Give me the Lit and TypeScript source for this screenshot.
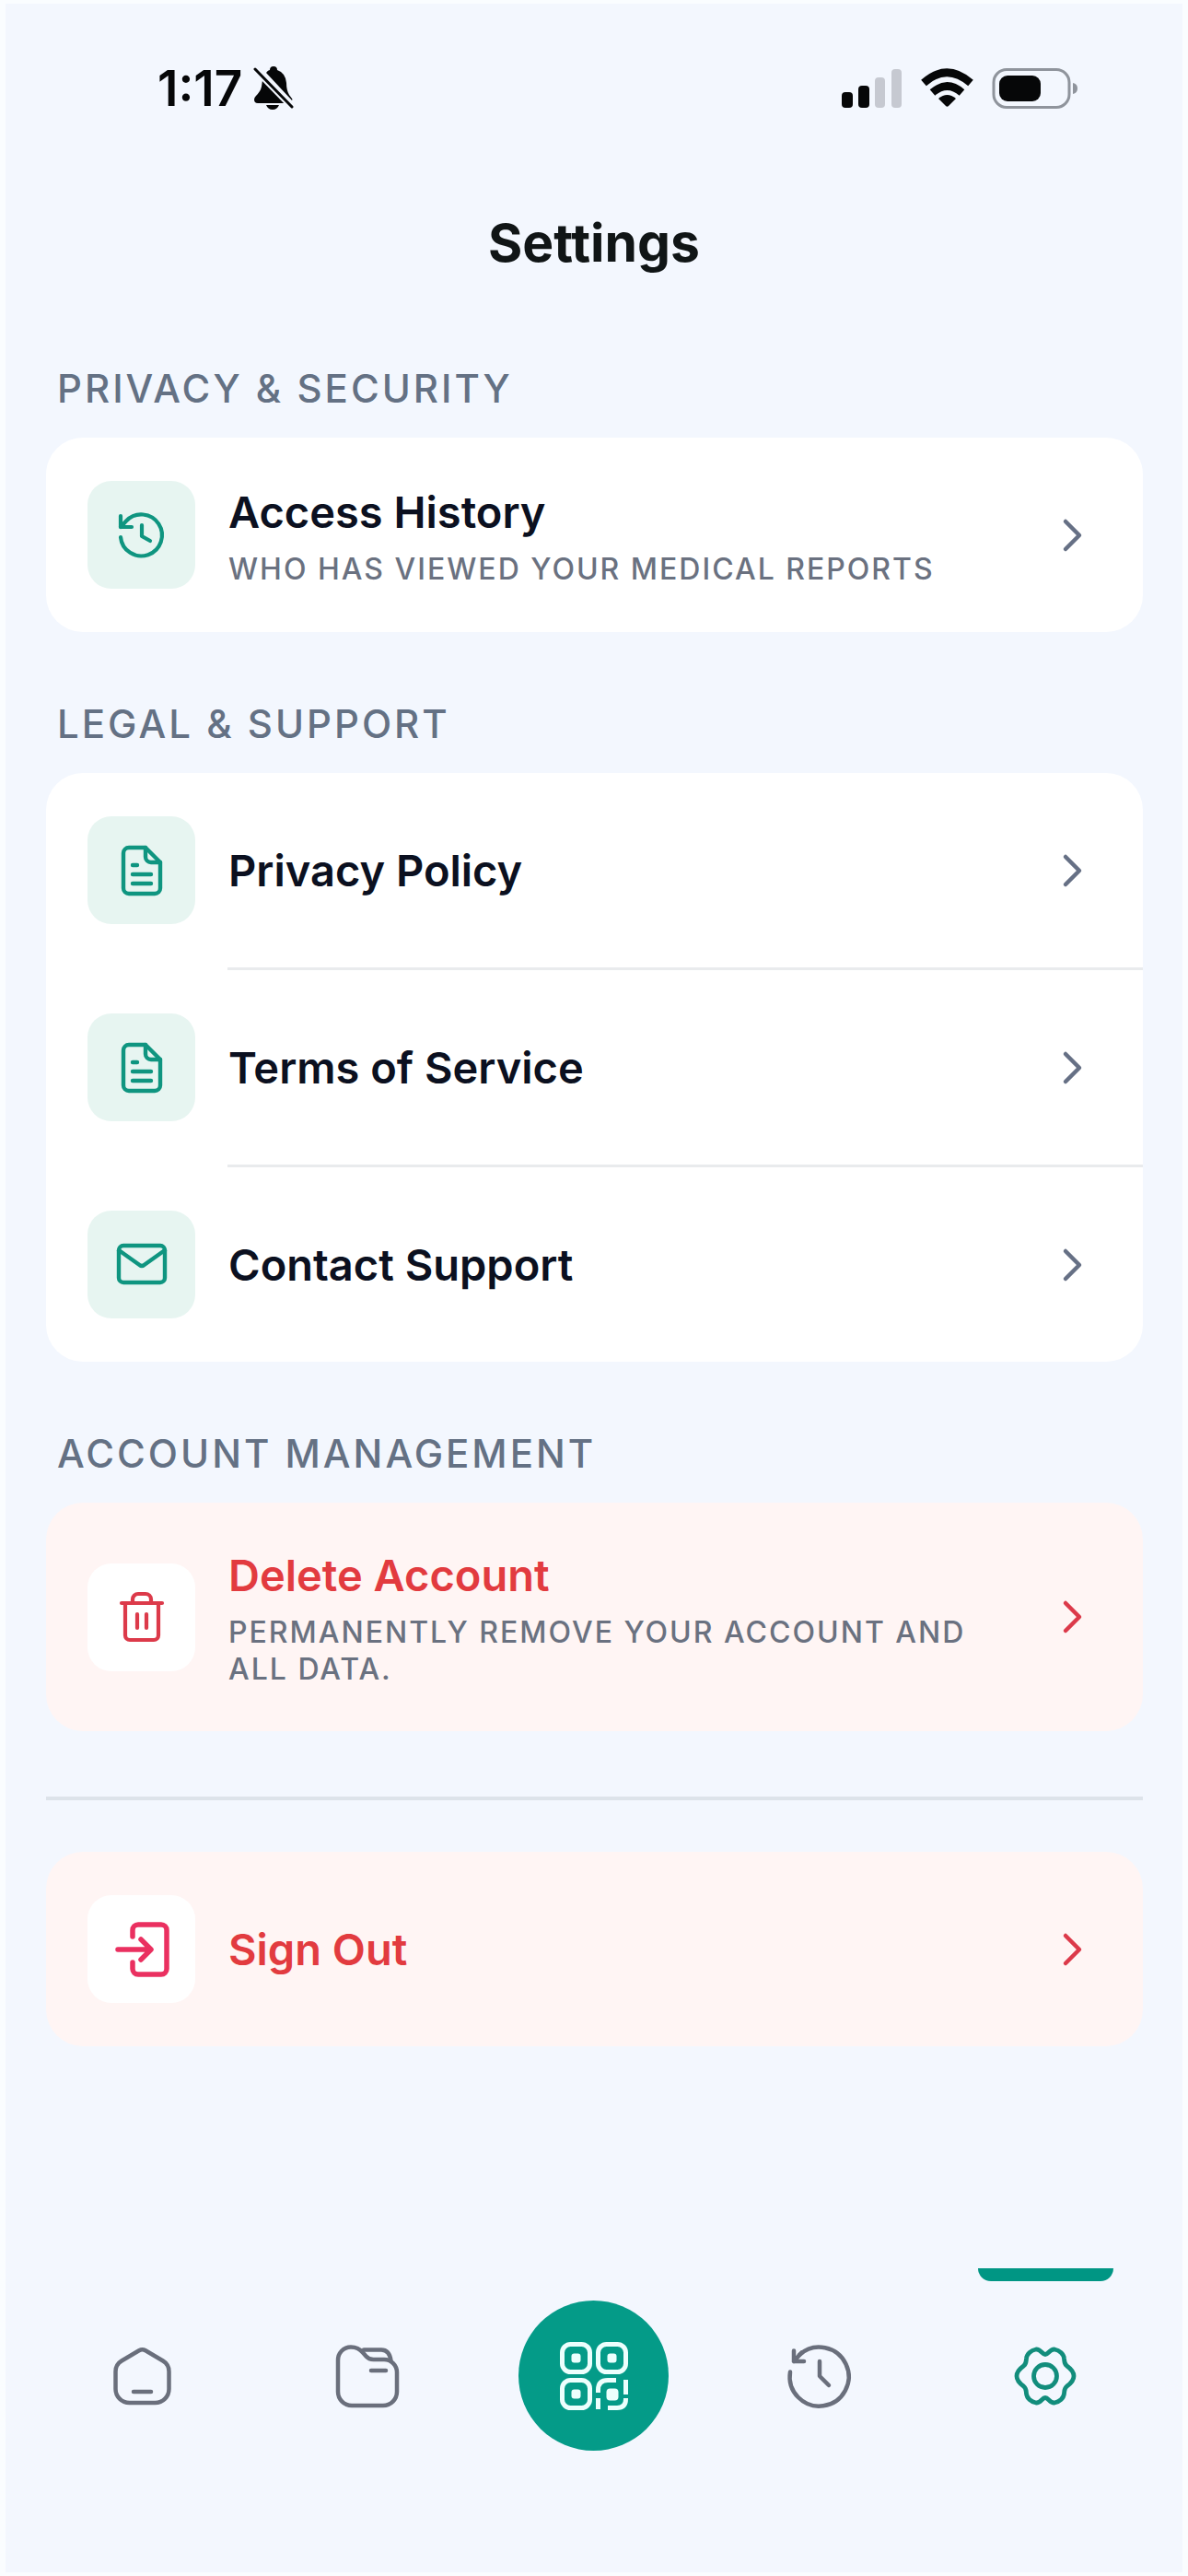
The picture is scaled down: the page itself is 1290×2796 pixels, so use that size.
import { LitElement, html, svg, css, nothing, type TemplateResult } from "lit";
import { customElement, property } from "lit/decorators.js";
import { classMap } from "lit/directives/class-map.js";

type IconName = "history" | "document" | "mail" | "trash" | "signOut" | "home" | "folder" | "qr" | "recent" | "gear";

const icons: Record<IconName, TemplateResult> = {
  history: svg`
    <g fill="none" stroke="currentColor" stroke-width="4.200" stroke-linecap="round" stroke-linejoin="round">
      <path d="M7 32a22.500 22.500 0 1 0 6-17.500L7 21"/>
      <path d="M7 9v12h12"/>
      <path d="M30 19v12l9 5"/>
    </g>`,
  document: svg`
    <g fill="none" stroke="currentColor" stroke-width="4.400" stroke-linecap="round" stroke-linejoin="round">
      <path d="M34 5H16a6 6 0 0 0-6 6v38a6 6 0 0 0 6 6h28a6 6 0 0 0 6-6V21Z"/>
      <path d="M34 5v10a6 6 0 0 0 6 6h10"/>
      <path d="M20 24h5M20 34h20M20 44h20"/>
    </g>`,
  mail: svg`
    <g fill="none" stroke="currentColor" stroke-width="4.400" stroke-linecap="round" stroke-linejoin="round">
      <rect x="5" y="9" width="50" height="40" rx="5"/>
      <path d="m5 14 22.500 16a4 4 0 0 0 5 0L55 14"/>
    </g>`,
  trash: svg`
    <g fill="none" stroke="currentColor" stroke-width="4.200" stroke-linecap="round" stroke-linejoin="round">
      <path d="M8 15h44"/>
      <path d="M12 15v35a5 5 0 0 0 5 5h26a5 5 0 0 0 5-5V15"/>
      <path d="M20 15v-4a6 6 0 0 1 6-6h8a6 6 0 0 1 6 6v4"/>
      <path d="M25 27v15M35 27v15"/>
    </g>`,
  signOut: svg`
    <g fill="none" stroke="currentColor" stroke-width="5.500" stroke-linecap="round" stroke-linejoin="round">
      <path d="M20 16V9a6 6 0 0 1 6-6h25a6 6 0 0 1 6 6v42a6 6 0 0 1-6 6H26a6 6 0 0 1-6-6v-7"/>
      <path d="M4 30h35M29 19l11 11-11 11"/>
    </g>`,
  home: svg`
    <g fill="none" stroke="currentColor" stroke-width="4.500" stroke-linecap="round" stroke-linejoin="round">
      <path d="M32 8.200 13 19.500Q6.500 23.500 6.500 31v19a15 15 0 0 0 15 15h28a15 15 0 0 0 15-15V31q0-7.500-6.500-11.500L39 8.200a7 7 0 0 0-7 0Z"/>
      <path d="M26 53h19"/>
    </g>`,
  folder: svg`
    <g fill="none" stroke="currentColor" stroke-width="4.500" stroke-linecap="round" stroke-linejoin="round">
      <path d="M3 19A14 14 0 0 1 17 4.500q8 0 13 6l3.500 4q3 3.500 8 3.500H53a14 14 0 0 1 14 14v21a15 15 0 0 1-15 15H18A15 15 0 0 1 3 53Z"/>
      <path d="M31 7.500h19q9 0 10.500 12"/>
      <path d="M39 30h16"/>
    </g>`,
  qr: svg`
    <g fill="none" stroke="currentColor" stroke-width="5" stroke-linecap="butt">
      <rect x="2.500" y="2.500" width="30" height="30" rx="9"/>
      <rect x="41.500" y="2.500" width="30" height="30" rx="9"/>
      <rect x="2.500" y="41.500" width="30" height="30" rx="9"/>
      <path d="M41.500 55v-3q0-10.500 10.500-10.500h9M71.500 41v16M41.500 61v12M71.500 61v1q0 9.500-9.500 9.500h-10"/>
    </g>
    <g fill="currentColor">
      <rect x="12.500" y="12.500" width="10" height="10" rx="3"/>
      <rect x="51.500" y="12.500" width="10" height="10" rx="3"/>
      <rect x="12.500" y="51.500" width="10" height="10" rx="3"/>
      <rect x="50.500" y="50.500" width="13" height="13" rx="4"/>
    </g>`,
  recent: svg`
    <g fill="none" stroke="currentColor" stroke-width="4.500" stroke-linecap="round" stroke-linejoin="round">
      <path d="M4 31.500A32 32 0 1 0 14 13"/>
      <path d="M8 8.500v11.500h11M8 20 16.500 10.500"/>
      <path d="M36 20v16l10 10"/>
    </g>`,
  gear: svg`
    <g fill="none" stroke="currentColor" stroke-width="4.800" stroke-linecap="round" stroke-linejoin="round">
      <path d="M36 12.500C32.500 12.500 31 6.500 26 7 20.500 8 16 12 15.500 17 15 21 15.500 22.500 12.500 25 9 27.500 5 30.500 5 36 5 41.500 9 44.500 12.500 47 15.500 49.500 15 51 15.500 55 16 60 20.500 64 26 65 31 65.500 32.500 59.500 36 59.500 39.500 59.500 41 65.500 46 65 51.500 64 56 60 56.500 55 57 51 56.500 49.500 59.500 47 63 44.500 67 41.500 67 36 67 30.500 63 27.500 59.500 25 56.500 22.500 57 21 56.500 17 56 12 51.500 8 46 7 41 6.500 39.500 12.500 36 12.500Z"/>
      <circle cx="36" cy="36" r="12.500"/>
    </g>`,
};

const viewBoxes: Record<IconName, string> = {
  history: "0 0 60 60",
  document: "0 0 60 60",
  mail: "0 0 60 60",
  trash: "0 0 60 60",
  signOut: "0 0 60 60",
  home: "0 0 72 72",
  folder: "0 0 72 72",
  qr: "0 0 74 74",
  recent: "0 0 72 72",
  gear: "0 0 72 72",
};

@customElement("ui-icon")
class UiIcon extends LitElement {
  static styles = css`
    :host {
      display: inline-flex;
      width: 60px;
      height: 60px;
    }
    svg {
      width: 100%;
      height: 100%;
      overflow: visible;
    }
  `;
  @property() name: IconName = "history";

  render() {
    return html`<svg viewBox=${viewBoxes[this.name]} aria-hidden="true">${icons[this.name]}</svg>`;
  }
}

@customElement("settings-row")
class SettingsRow extends LitElement {
  static styles = css`
    :host {
      display: block;
    }
    .row {
      display: flex;
      align-items: center;
      gap: 36px;
      width: 100%;
      padding: 47px 49px 47px 45px;
      border: 0;
      background: none;
      color: #0b1020;
      font: inherit;
      text-align: left;
      cursor: pointer;
    }
    .tile {
      display: flex;
      flex: none;
      align-items: center;
      justify-content: center;
      width: 117px;
      height: 117px;
      border-radius: 26px;
      background: #e7f5f1;
      color: #0f9580;
    }
    .text {
      display: flex;
      flex: 1;
      flex-direction: column;
      gap: 10px;
      min-width: 0;
    }
    .title {
      font-size: 47px;
      font-weight: 600;
      line-height: 64px;
    }
    .note {
      color: #6a7180;
      font-size: 32px;
      font-weight: 500;
      line-height: 40px;
      letter-spacing: 2px;
      text-transform: uppercase;
    }
    .chevron {
      flex: none;
      width: 54px;
      height: 54px;
      color: #667085;
    }
    .danger {
      color: #e23b3f;
    }
    .danger .tile {
      background: #ffffff;
      color: #dc3a4a;
    }
    .danger .chevron {
      color: #dc3a4a;
    }
    .exit .tile {
      color: #ea3060;
    }
  `;
  @property() icon: IconName = "history";
  @property() label = "";
  @property() note = "";
  @property({ type: Boolean }) danger = false;

  render() {
    const classes = { row: true, danger: this.danger, exit: this.icon === "signOut" };
    return html`
      <button type="button" class=${classMap(classes)}>
        <span class="tile"><ui-icon name=${this.icon}></ui-icon></span>
        <span class="text">
          <span class="title">${this.label}</span>
          ${this.note ? html`<span class="note">${this.note}</span>` : nothing}
        </span>
        <svg class="chevron" viewBox="0 0 54 54" aria-hidden="true">
          <path d="m19 12 15 15-15 15" fill="none" stroke="currentColor" stroke-width="4.500" stroke-linecap="round" stroke-linejoin="round" />
        </svg>
      </button>
    `;
  }
}

interface Row {
  icon: IconName;
  label: string;
  note?: string;
}

interface Section {
  heading: string;
  danger?: boolean;
  rows: Row[];
}

const sections: Section[] = [
  {
    heading: "Privacy & Security",
    rows: [{ icon: "history", label: "Access History", note: "Who has viewed your medical reports" }],
  },
  {
    heading: "Legal & Support",
    rows: [
      { icon: "document", label: "Privacy Policy" },
      { icon: "document", label: "Terms of Service" },
      { icon: "mail", label: "Contact Support" },
    ],
  },
  {
    heading: "Account Management",
    danger: true,
    rows: [{ icon: "trash", label: "Delete Account", note: "Permanently remove your account and all data." }],
  },
];

const tabs: { icon: IconName; label: string; href: string }[] = [
  { icon: "home", label: "Home", href: "#home" },
  { icon: "folder", label: "Records", href: "#records" },
  { icon: "qr", label: "Scan", href: "#scan" },
  { icon: "recent", label: "Recent", href: "#recent" },
  { icon: "gear", label: "Settings", href: "#settings" },
];

@customElement("app-root")
class AppRoot extends LitElement {
  static styles = css`
    :host {
      display: block;
      font-family: Inter, "Liberation Sans", sans-serif;
    }
    .screen {
      display: flex;
      flex-direction: column;
      box-sizing: border-box;
      min-height: 100vh;
      border: 6px solid #fafdff;
      border-width: 4px 6px;
      background: #f3f7fe;
    }
    .status {
      display: flex;
      align-items: center;
      justify-content: space-between;
      padding: 60px 114px 0 165px;
      color: #060708;
    }
    .clock {
      display: flex;
      align-items: center;
      gap: 12px;
      font-size: 53px;
      font-weight: 600;
      line-height: 64px;
    }
    .bell {
      width: 44px;
      height: 48px;
    }
    .signals {
      width: 256px;
      height: 44px;
    }
    .page-title {
      margin: 102px 0 0;
      color: #101516;
      font-size: 57px;
      font-weight: 700;
      line-height: 68px;
      text-align: center;
    }
    .content {
      display: flex;
      flex-direction: column;
      padding: 99px 43px 0 44px;
    }
    .section {
      margin-bottom: 75px;
    }
    .heading {
      margin: 0 0 28px;
      padding-left: 12px;
      color: #647184;
      font-size: 42px;
      font-weight: 500;
      line-height: 50px;
      letter-spacing: 3px;
      text-transform: uppercase;
    }
    .card {
      margin: 0;
      padding: 0;
      border-radius: 40px;
      background: #ffffff;
      list-style: none;
    }
    .card.danger {
      background: #fff5f4;
    }
    .item + .item::before {
      content: "";
      display: block;
      height: 3px;
      margin-left: 197px;
      background: #e9ebed;
    }
    .rule {
      height: 4px;
      margin: -4px 0 56px;
      border: 0;
      background: #dde3ea;
    }
    .tabs {
      display: grid;
      grid-template-columns: repeat(5, 1fr);
      margin-top: auto;
      padding: 0 26px 132px;
    }
    .tab {
      display: grid;
      grid-template-rows: 14px 163px;
      row-gap: 21px;
      justify-items: center;
      align-items: center;
      color: #6a6f7c;
    }
    .tab::before {
      content: "";
      width: 147px;
      height: 14px;
      border-radius: 0 0 14px 14px;
    }
    .tab.active {
      color: #128d7c;
    }
    .tab.active::before {
      background: #009684;
    }
    .badge {
      display: flex;
      align-items: center;
      justify-content: center;
      width: 163px;
      height: 163px;
      border-radius: 50%;
    }
    .badge ui-icon {
      width: 72px;
      height: 72px;
    }
    .badge.primary {
      background: #049b88;
      color: #ecfffd;
    }
    .badge.primary ui-icon {
      width: 74px;
      height: 74px;
    }
  `;

  private renderSection(section: Section) {
    return html`
      <section class="section">
        <h2 class="heading">${section.heading}</h2>
        <ul class=${classMap({ card: true, danger: !!section.danger })}>
          ${section.rows.map(
            (row) => html`
              <li class="item">
                <settings-row icon=${row.icon} label=${row.label} note=${row.note ?? ""} ?danger=${section.danger}></settings-row>
              </li>
            `,
          )}
        </ul>
      </section>
    `;
  }

  render() {
    return html`
      <div class="screen">
        <header>
          <div class="status">
            <div class="clock">
              <span>1:17</span>
              <svg class="bell" viewBox="0 0 44 48" aria-hidden="true">
                <g fill="currentColor">
                  <path d="M10 15 35 40H5q-4 0-4-4 0-2 2-4 5-5 6-10Z" />
                  <path d="M14 7q2-3 4-3 0-4 4-4t4 4q9 3 10 14 0 8 3 13l3 4q1 1 0 2Z" />
                  <path d="M14 42h14q-2 5-7 5t-7-5Z" />
                </g>
                <path d="m2 3 40 41" fill="none" stroke="#f3f7fe" stroke-width="7" />
                <path d="m2 3 40 41" fill="none" stroke="currentColor" stroke-width="3" stroke-linecap="round" />
              </svg>
            </div>
            <svg class="signals" viewBox="0 0 256 44" aria-hidden="true">
              <g fill="#060708">
                <rect x="0" y="26" width="12" height="17" rx="4" />
                <rect x="18" y="19" width="12" height="24" rx="4" />
              </g>
              <g fill="#c6c9d1">
                <rect x="36" y="10" width="11" height="33" rx="4" />
                <rect x="54" y="1" width="11" height="42" rx="4" />
              </g>
              <g fill="none" stroke="#060708" stroke-width="8.500">
                <path d="M89 16q25-22.500 51 0" />
                <path d="M98.500 26.500q16-14 32 0" />
              </g>
              <path d="M105 33q9.500-8 19 0l-8 8q-1.500 1.500-3 0Z" fill="#060708" />
              <rect x="165" y="1.500" width="82" height="41" rx="14" fill="none" stroke="#8f949c" stroke-width="3" />
              <rect x="171" y="8" width="45" height="28" rx="9" fill="#060708" />
              <path d="M251 16q5 1 5 6t-5 6Z" fill="#8f949c" />
            </svg>
          </div>
          <h1 class="page-title">Settings</h1>
        </header>
        <main class="content">
          ${sections.map((section) => this.renderSection(section))}
          <hr class="rule" />
          <div class="card danger">
            <settings-row icon="signOut" label="Sign Out" danger></settings-row>
          </div>
        </main>
        <nav class="tabs" aria-label="Main">
          ${tabs.map((tab) => {
            const active = tab.icon === "gear";
            return html`
              <a class=${classMap({ tab: true, active })} href=${tab.href} aria-label=${tab.label} aria-current=${active ? "page" : nothing}>
                <span class=${classMap({ badge: true, primary: tab.icon === "qr" })}><ui-icon name=${tab.icon}></ui-icon></span>
              </a>
            `;
          })}
        </nav>
      </div>
    `;
  }
}
